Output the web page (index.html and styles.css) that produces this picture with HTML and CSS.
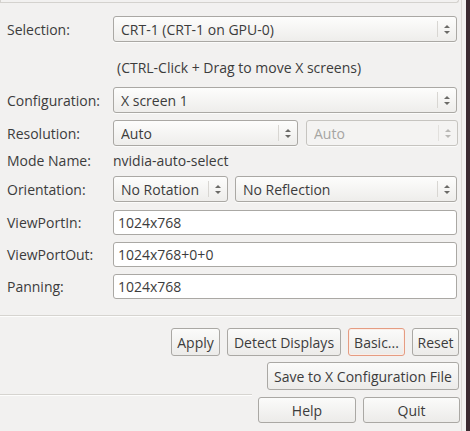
FILE: index.html
```html
<!DOCTYPE html>
<html lang="en">
<head>
    <meta charset="UTF-8">
    <title>X Server Display Configuration</title>
    <link rel="stylesheet" href="styles.css">
</head>
<body>
    <div class="window">
        <div class="panel">
            <div class="top-frame"></div>

            <div class="row row-select">
                <span class="label">Selection:</span>
                <div class="combo wide">
                    <span class="value">CRT-1 (CRT-1 on GPU-0)</span>
                    <span class="arrows"></span>
                </div>
            </div>

            <div class="row row-hint">
                <span class="label"></span>
                <span class="hint">(CTRL-Click + Drag to move X screens)</span>
            </div>

            <div class="row row-config">
                <span class="label">Configuration:</span>
                <div class="combo wide">
                    <span class="value">X screen 1</span>
                    <span class="arrows"></span>
                </div>
            </div>

            <div class="row row-res">
                <span class="label">Resolution:</span>
                <div class="pair res-pair">
                    <div class="combo res-main">
                        <span class="value">Auto</span>
                        <span class="arrows"></span>
                    </div>
                    <div class="combo res-rate disabled">
                        <span class="value">Auto</span>
                        <span class="arrows"></span>
                    </div>
                </div>
            </div>

            <div class="row row-mode">
                <span class="label">Mode Name:</span>
                <span class="plain">nvidia-auto-select</span>
            </div>

            <div class="row row-orient">
                <span class="label">Orientation:</span>
                <div class="pair orient-pair">
                    <div class="combo rot">
                        <span class="value">No Rotation</span>
                        <span class="arrows"></span>
                    </div>
                    <div class="combo refl">
                        <span class="value">No Reflection</span>
                        <span class="arrows"></span>
                    </div>
                </div>
            </div>

            <div class="row row-entry first">
                <span class="label">ViewPortIn:</span>
                <div class="entry">1024x768</div>
            </div>

            <div class="row row-entry">
                <span class="label">ViewPortOut:</span>
                <div class="entry">1024x768+0+0</div>
            </div>

            <div class="row row-entry">
                <span class="label">Panning:</span>
                <div class="entry">1024x768</div>
            </div>

            <div class="separator"></div>

            <div class="button-row first">
                <button class="btn btn-apply">Apply</button>
                <button class="btn btn-detect">Detect Displays</button>
                <button class="btn btn-basic focus">Basic...</button>
                <button class="btn btn-reset">Reset</button>
            </div>

            <div class="button-row save">
                <button class="btn btn-save">Save to X Configuration File</button>
            </div>

            <div class="bottom-row">
                <div class="bottom-sep"></div>
                <button class="btn btn-help">Help</button>
                <button class="btn btn-quit">Quit</button>
            </div>
        </div>
        <div class="edge"></div>
    </div>
</body>
</html>
```

FILE: styles.css
```css
body {
    margin: 0;
    padding: 0;
    background-color: #f2f1f0;
    font-family: "Open Sans", "DejaVu Sans", sans-serif;
    font-size: 14px;
    color: #3c3c3c;
}
.window {
    display: flex;
    width: 470px;
    height: 431px;
    overflow: hidden;
}
.panel {
    width: 461px;
    border-right: 1px solid #dcdad6;
    display: flex;
    flex-direction: column;
}
.edge {
    flex: 1;
    background: linear-gradient(to right, #f2f1f0 0, #f2f1f0 4px, #3b2a30 4px);
}
.top-frame {
    height: 2px;
    width: 457px;
    border: 1px solid #d4d2ce;
    border-top: none;
    border-radius: 0 0 4px 0;
}
.row {
    display: flex;
    align-items: center;
    padding-left: 7px;
}
.label {
    width: 106px;
    flex-shrink: 0;
    white-space: nowrap;
}
.pair {
    display: flex;
    align-items: center;
}
.res-pair {
    gap: 8px;
}
.orient-pair {
    gap: 7px;
}
.row-select {
    margin-top: 13px;
    height: 26px;
}
.row-hint {
    margin-top: 16px;
    height: 18px;
}
.hint {
    padding-left: 4px;
}
.row-config {
    margin-top: 11px;
    height: 26px;
}
.row-res {
    margin-top: 7px;
    height: 26px;
}
.row-mode {
    margin-top: 5px;
    height: 18px;
}
.row-orient {
    margin-top: 7px;
    height: 26px;
}
.row-entry {
    margin-top: 7px;
    height: 25px;
}
.row-entry.first {
    margin-top: 8px;
}

/* combo boxes */
.combo {
    box-sizing: border-box;
    height: 26px;
    display: flex;
    align-items: center;
    border: 1px solid #aaa8a4;
    border-radius: 3px;
    background: linear-gradient(#fdfdfc, #eeedeb);
    padding-left: 7px;
    white-space: nowrap;
    box-shadow: 0 1px 0 #fbfbfa;
}
.combo .value {
    flex: 1;
    overflow: hidden;
}
.combo .arrows {
    width: 18px;
    align-self: stretch;
    margin: 4px 0;
    border-left: 1px solid #d8d6d2;
    display: flex;
    flex-direction: column;
    align-items: center;
    justify-content: center;
    gap: 3px;
}
.combo .arrows::before,
.combo .arrows::after {
    content: '';
    width: 0;
    height: 0;
    border-left: 3px solid transparent;
    border-right: 3px solid transparent;
}
.combo .arrows::before {
    border-bottom: 3px solid #6b6a67;
}
.combo .arrows::after {
    border-top: 3px solid #6b6a67;
}
.combo.wide {
    width: 344px;
}
.res-main {
    width: 185px;
}
.res-rate {
    width: 152px;
}
.rot {
    width: 115px;
}
.refl {
    width: 222px;
}
.combo.disabled {
    color: #a6a5a2;
    border-color: #c6c4c0;
    background: #f4f3f2;
}
.combo.disabled .arrows {
    border-left-color: #e2e0dd;
}
.combo.disabled .arrows::before {
    border-bottom-color: #b9b8b5;
}
.combo.disabled .arrows::after {
    border-top-color: #b9b8b5;
}

/* text entries */
.entry {
    box-sizing: border-box;
    width: 344px;
    height: 25px;
    line-height: 23px;
    padding-left: 4px;
    border: 1px solid #aaa8a4;
    border-radius: 3px;
    background: #fff;
}

.separator {
    margin-top: 16px;
    height: 1px;
    border-top: 1px solid #d6d4d0;
    background: #fdfdfc;
}

/* buttons */
.btn {
    box-sizing: border-box;
    font-family: inherit;
    font-size: 14px;
    color: #3c3c3c;
    height: 28px;
    padding: 0;
    border: 1px solid #aaa8a4;
    border-radius: 3px;
    background: linear-gradient(#fbfbfa, #ecebe9);
    white-space: nowrap;
}
.btn.focus {
    border-color: #e59c82;
    box-shadow: inset 0 0 0 1px #fbeee8;
}
.button-row {
    display: flex;
    justify-content: flex-end;
    gap: 7px;
    padding-right: 2px;
}
.button-row.first {
    margin-top: 11px;
}
.button-row.save {
    margin-top: 6px;
}
.btn-apply { width: 49px; }
.btn-detect { width: 114px; }
.btn-basic { width: 57px; }
.btn-reset { width: 47px; }
.btn-save { width: 192px; }

.bottom-row {
    display: flex;
    align-items: flex-start;
    margin-top: 4px;
}
.bottom-sep {
    width: 252px;
    height: 1px;
    border-top: 1px solid #d6d4d0;
    background: #fdfdfc;
    margin-right: 6px;
}
.btn-help {
    width: 98px;
    height: 26px;
    margin-top: 3px;
}
.btn-quit {
    width: 97px;
    height: 26px;
    margin-top: 3px;
    margin-left: 7px;
}
```
